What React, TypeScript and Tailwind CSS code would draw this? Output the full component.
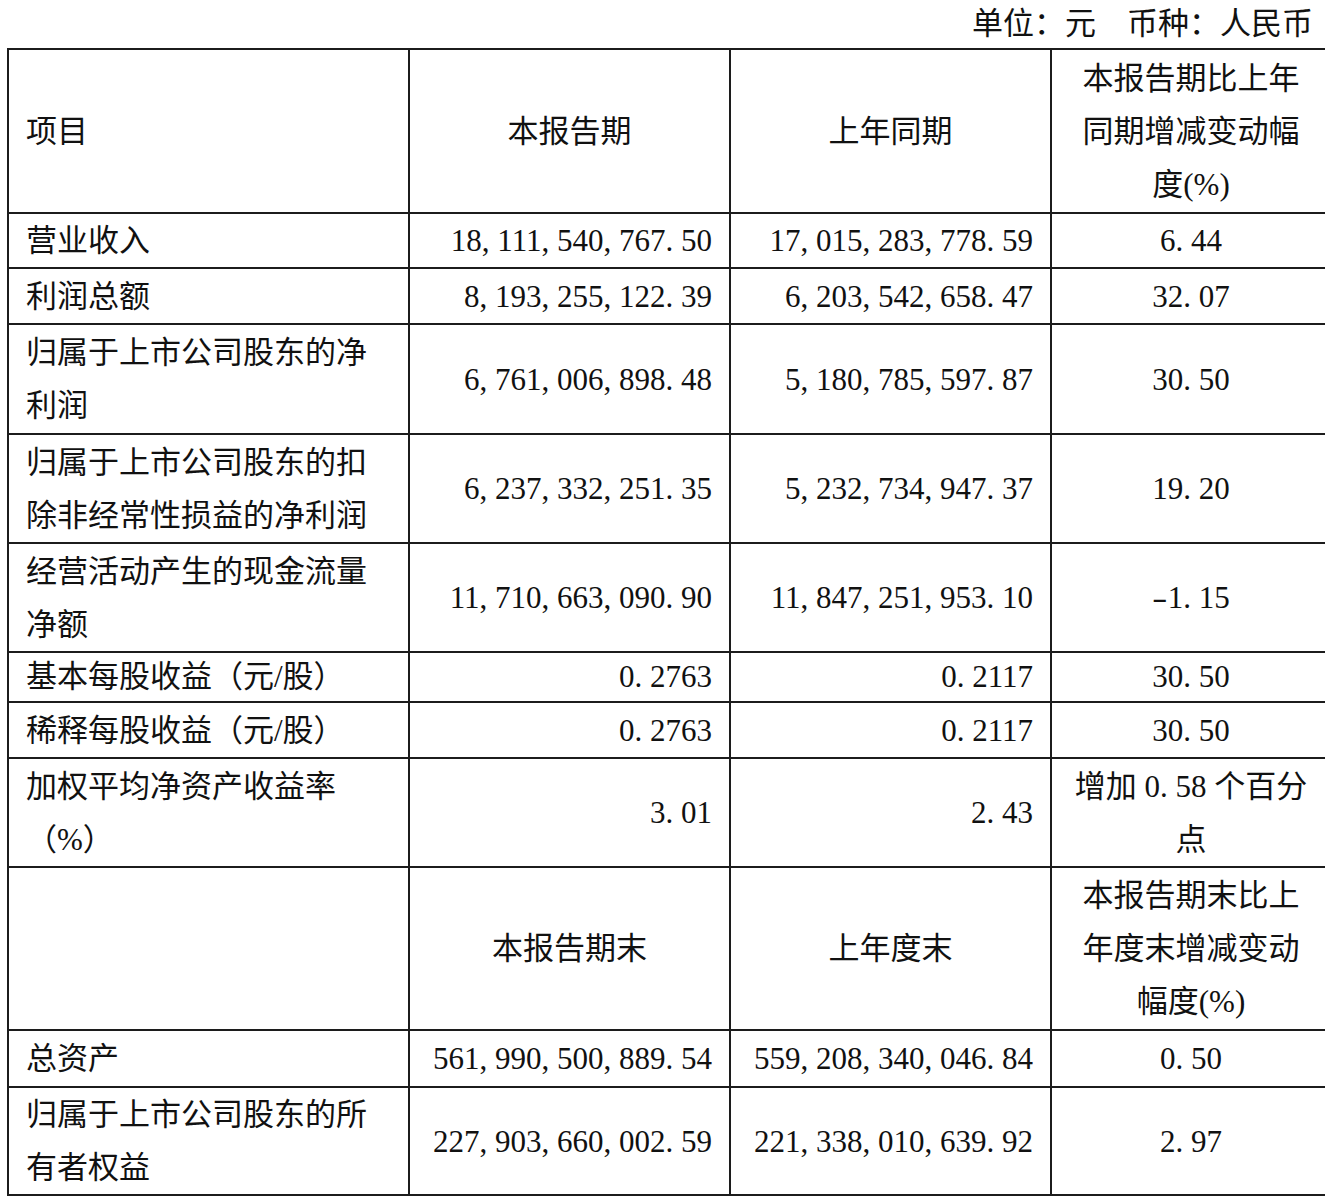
import React from 'react';

type Row = {
    label: React.ReactNode;
    cur: string;
    prev: string;
    change: React.ReactNode;
    h: string;
};

const rows: Row[] = [
    { label: '营业收入', cur: '18,111,540,767.50', prev: '17,015,283,778.59', change: '6.44', h: 'h-[55px]' },
    { label: '利润总额', cur: '8,193,255,122.39', prev: '6,203,542,658.47', change: '32.07', h: 'h-[56px]' },
    { label: <>归属于上市公司股东的净<br />利润</>, cur: '6,761,006,898.48', prev: '5,180,785,597.87', change: '30.50', h: 'h-[110px]' },
    { label: <>归属于上市公司股东的扣<br />除非经常性损益的净利润</>, cur: '6,237,332,251.35', prev: '5,232,734,947.37', change: '19.20', h: 'h-[109px]' },
    { label: <>经营活动产生的现金流量<br />净额</>, cur: '11,710,663,090.90', prev: '11,847,251,953.10', change: '-1.15', h: 'h-[109px]' },
    { label: '基本每股收益（元/股）', cur: '0.2763', prev: '0.2117', change: '30.50', h: 'h-[50px] leading-[44px]' },
    { label: '稀释每股收益（元/股）', cur: '0.2763', prev: '0.2117', change: '30.50', h: 'h-[56px]' },
    {
        label: <>加权平均净资产收益率<br />（%）</>,
        cur: '3.01',
        prev: '2.43',
        change: <>增加 <Num v="0.58" /> 个百分<br />点</>,
        h: 'h-[109px]',
    },
];

const rows2: Row[] = [
    { label: '总资产', cur: '561,990,500,889.54', prev: '559,208,340,046.84', change: '0.50', h: 'h-[57px]' },
    { label: <>归属于上市公司股东的所<br />有者权益</>, cur: '227,903,660,002.59', prev: '221,338,010,639.92', change: '2.97', h: 'h-[107px]' },
];

// SimSun-style numbers: every glyph takes half an em, punctuation included
function Num({ v }: { v: string }) {
    return (
        <span className="whitespace-nowrap">
            {v.split('').map((c, i) =>
                c === '-' ? (
                    <span key={i} className="inline-block w-[0.5em] text-center scale-x-150">{c}</span>
                ) : c === ',' || c === '.' ? (
                    <span key={i} className="inline-block w-[0.5em] text-left">{c}</span>
                ) : (
                    <span key={i}>{c}</span>
                )
            )}
        </span>
    );
}

const cell = 'border-2 border-[#1c1c1c] px-[17px] py-0 align-middle';

function DataRow({ r }: { r: Row }) {
    return (
        <tr className={r.h}>
            <td className={`${cell} text-left`}>{r.label}</td>
            <td className={`${cell} text-right`}><Num v={r.cur} /></td>
            <td className={`${cell} text-right`}><Num v={r.prev} /></td>
            <td className={`${cell} text-center`}>
                {typeof r.change === 'string' ? <Num v={r.change} /> : r.change}
            </td>
        </tr>
    );
}

export default function App() {
    return (
        <div
            className="w-[1325px] h-[1196px] overflow-hidden bg-white text-[#111] text-[31px] leading-[53px]"
            style={{ fontFamily: '"Liberation Serif", "Noto Sans CJK SC", serif' }}
        >
            {/* unit note */}
            <div className="h-[48px] flex items-center justify-end pr-[12px]">
                <span className="leading-[40px]">单位：元　币种：人民币</span>
            </div>

            <table className="ml-[7px] w-[1323px] table-fixed border-collapse">
                <colgroup>
                    <col className="w-[401px]" />
                    <col className="w-[321px]" />
                    <col className="w-[321px]" />
                    <col className="w-[280px]" />
                </colgroup>
                <tbody>
                    <tr className="h-[164px]">
                        <td className={`${cell} text-left`}>项目</td>
                        <td className={`${cell} text-center`}>本报告期</td>
                        <td className={`${cell} text-center`}>上年同期</td>
                        <td className={`${cell} text-center`}>
                            本报告期比上年<br />同期增减变动幅<br />度(%)
                        </td>
                    </tr>
                    {rows.map((r, i) => <DataRow key={i} r={r} />)}
                    <tr className="h-[163px]">
                        <td className={cell}></td>
                        <td className={`${cell} text-center`}>本报告期末</td>
                        <td className={`${cell} text-center`}>上年度末</td>
                        <td className={`${cell} text-center`}>
                            本报告期末比上<br />年度末增减变动<br />幅度(%)
                        </td>
                    </tr>
                    {rows2.map((r, i) => <DataRow key={i} r={r} />)}
                </tbody>
            </table>
        </div>
    );
}
